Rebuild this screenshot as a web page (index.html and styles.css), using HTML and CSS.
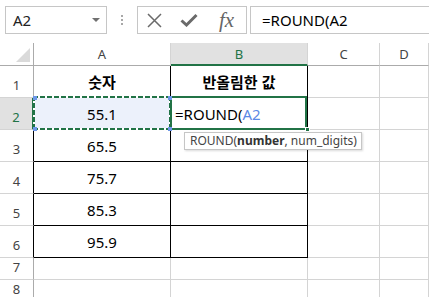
FILE: index.html
```html
<!DOCTYPE html>
<html lang="ko">
<head>
<meta charset="utf-8">
<link rel="stylesheet" href="styles.css">
</head>
<body>
<div class="toolbar">
  <div class="namebox"><span>A2</span><span class="caret"></span></div>
  <div class="grip"><i></i><i></i><i></i></div>
  <div class="fbtns">
    <svg class="ic-x" width="15" height="15" viewBox="0 0 15 15"><path d="M1 1 L14 14 M14 1 L1 14" stroke="#6a6a6a" stroke-width="1.5" fill="none"/></svg>
    <svg class="ic-ok" width="18" height="14" viewBox="0 0 18 14"><path d="M1.5 7.5 L6.5 12 L16.5 2" stroke="#6a6a6a" stroke-width="3" fill="none"/></svg>
    <span class="fx">fx</span>
  </div>
  <div class="finput">=ROUND(A2</div>
</div>
<div class="sheet">
  <div class="corner"></div>
  <div class="ch">A</div>
  <div class="ch sel">B</div>
  <div class="ch">C</div>
  <div class="ch">D</div>

  <div class="rh dark r1">1</div>
  <div class="c t hd">숫자</div>
  <div class="c t hd">반올림한 값</div>
  <div class="c"></div>
  <div class="c"></div>

  <div class="rh sel">2</div>
  <div class="c t ref">55.1<span class="h tl"></span><span class="h tr"></span><span class="h bl"></span><span class="h br"></span></div>
  <div class="c t edit"><span>=ROUND(</span><span class="blue">A2</span><span class="fill"></span>
    <div class="tip">ROUND(<b>number</b>, num_digits)</div>
  </div>
  <div class="c"></div>
  <div class="c"></div>

  <div class="rh dark">3</div>
  <div class="c t">65.5</div>
  <div class="c t"></div>
  <div class="c"></div>
  <div class="c"></div>

  <div class="rh dark">4</div>
  <div class="c t">75.7</div>
  <div class="c t"></div>
  <div class="c"></div>
  <div class="c"></div>

  <div class="rh dark">5</div>
  <div class="c t">85.3</div>
  <div class="c t"></div>
  <div class="c"></div>
  <div class="c"></div>

  <div class="rh dark">6</div>
  <div class="c t">95.9</div>
  <div class="c t"></div>
  <div class="c"></div>
  <div class="c"></div>

  <div class="rh">7</div>
  <div class="c"></div>
  <div class="c"></div>
  <div class="c"></div>
  <div class="c"></div>

  <div class="rh">8</div>
  <div class="c"></div>
  <div class="c"></div>
  <div class="c"></div>
  <div class="c"></div>
</div>
</body>
</html>
```

FILE: styles.css
```css
* { box-sizing: border-box; margin: 0; padding: 0; }
html, body { width: 429px; height: 297px; overflow: hidden; background: #fff; }
body { font-family: "Noto Sans", "Noto Sans CJK KR", sans-serif; color: #000; }

.toolbar { height: 43px; display: flex; align-items: flex-start; padding: 6px 0 0 5px; }
.namebox { width: 102px; height: 28px; border: 1px solid #c6c6c6; display: flex; align-items: center; justify-content: space-between; padding: 0 6px 0 7px; font-size: 15px; color: #222; }
.caret { width: 0; height: 0; border-left: 4px solid transparent; border-right: 4px solid transparent; border-top: 4px solid #707070; }
.grip { width: 30px; height: 28px; display: flex; flex-direction: column; align-items: center; justify-content: center; gap: 2px; }
.grip i { display: block; width: 2px; height: 2px; background: #a8a8a8; }
.fbtns { width: 110px; height: 28px; border: 1px solid #c6c6c6; display: flex; align-items: center; padding-left: 9px; }
.ic-ok { margin-left: 18px; }
.fx { margin-left: 21px; font-family: "Liberation Serif", serif; font-style: italic; font-size: 21px; color: #666; line-height: 1; }
.finput { flex: 1; margin-left: 3px; height: 28px; border: 1px solid #c6c6c6; border-right: none; padding-left: 11px; font-size: 15px; display: flex; align-items: center; }

.sheet { display: grid; grid-template-columns: 34px 137px 137px 72px 1fr; grid-template-rows: 23px repeat(6, 32px) 22px 1fr; height: 254px; }

.corner { border-right: 1px solid #ababab; border-bottom: 1px solid #ababab; position: relative; }
.corner::after { content: ""; position: absolute; right: 3px; bottom: 3px; width: 0; height: 0; border-left: 14px solid transparent; border-bottom: 14px solid #dadada; }

.ch { border-right: 1px solid #d4d4d4; border-bottom: 1px solid #ababab; display: flex; align-items: center; justify-content: center; font-size: 13px; color: #444; }
.ch.sel { background: #e1e1e1; color: #217346; border-bottom: 2px solid #217346; }

.rh { border-right: 1px solid #ababab; border-bottom: 1px solid #d4d4d4; display: flex; align-items: flex-end; justify-content: center; font-size: 13px; color: #444; padding-bottom: 3px; }
.rh.dark { border-right-color: #000; }
.rh.r1 { border-right-color: #ababab; }
.rh.sel { background: #e1e1e1; color: #217346; border-right: 2px solid #217346; }

.c { border-right: 1px solid #d4d4d4; border-bottom: 1px solid #d4d4d4; position: relative; display: flex; align-items: flex-end; justify-content: center; font-size: 15px; padding-bottom: 5px; line-height: 20px; }
.c.t { border-right-color: #000; border-bottom-color: #000; }
.hd { font-weight: 700; font-family: "Noto Sans CJK KR", sans-serif; padding-bottom: 5px; }

.ref { background: #ecf1fb; }
.ref::before { content: ""; position: absolute; left: -1px; top: -2px; right: -1px; bottom: -1px;
  background:
    repeating-linear-gradient(90deg, #217346 0 5px, #fff 5px 7px) top / 100% 2px no-repeat,
    repeating-linear-gradient(90deg, #217346 0 5px, #fff 5px 7px) bottom / 100% 2px no-repeat,
    repeating-linear-gradient(180deg, #217346 0 5px, #fff 5px 7px) left / 2px 100% no-repeat,
    repeating-linear-gradient(180deg, #217346 0 5px, #fff 5px 7px) right / 2px 100% no-repeat; }
.h { position: absolute; width: 4px; height: 4px; background: #6d97e8; z-index: 2; }
.h.tl { left: -1px; top: -2px; }
.h.tr { right: -2px; top: -2px; }
.h.bl { left: -1px; bottom: -2px; }
.h.br { right: -2px; bottom: -2px; }

.edit { justify-content: flex-start; padding-left: 4px; }
.edit::after { content: ""; position: absolute; left: -1px; top: -2px; right: 0; bottom: -1px; border: 2px solid #217346; }
.blue { color: #5b8ae6; }
.fill { position: absolute; right: -3px; bottom: -3px; width: 5px; height: 5px; background: #217346; border: 1px solid #fff; z-index: 3; }
.tip { position: absolute; left: 13px; top: 34px; z-index: 4; white-space: nowrap; background: #fff; border: 1px solid #c6c6c6; box-shadow: 1px 1px 2px rgba(0,0,0,0.15); font-size: 12px; line-height: 15px; color: #444; padding: 0 4px 0 5px; height: 18px; }
.tip b { font-weight: 700; color: #333; }
```
